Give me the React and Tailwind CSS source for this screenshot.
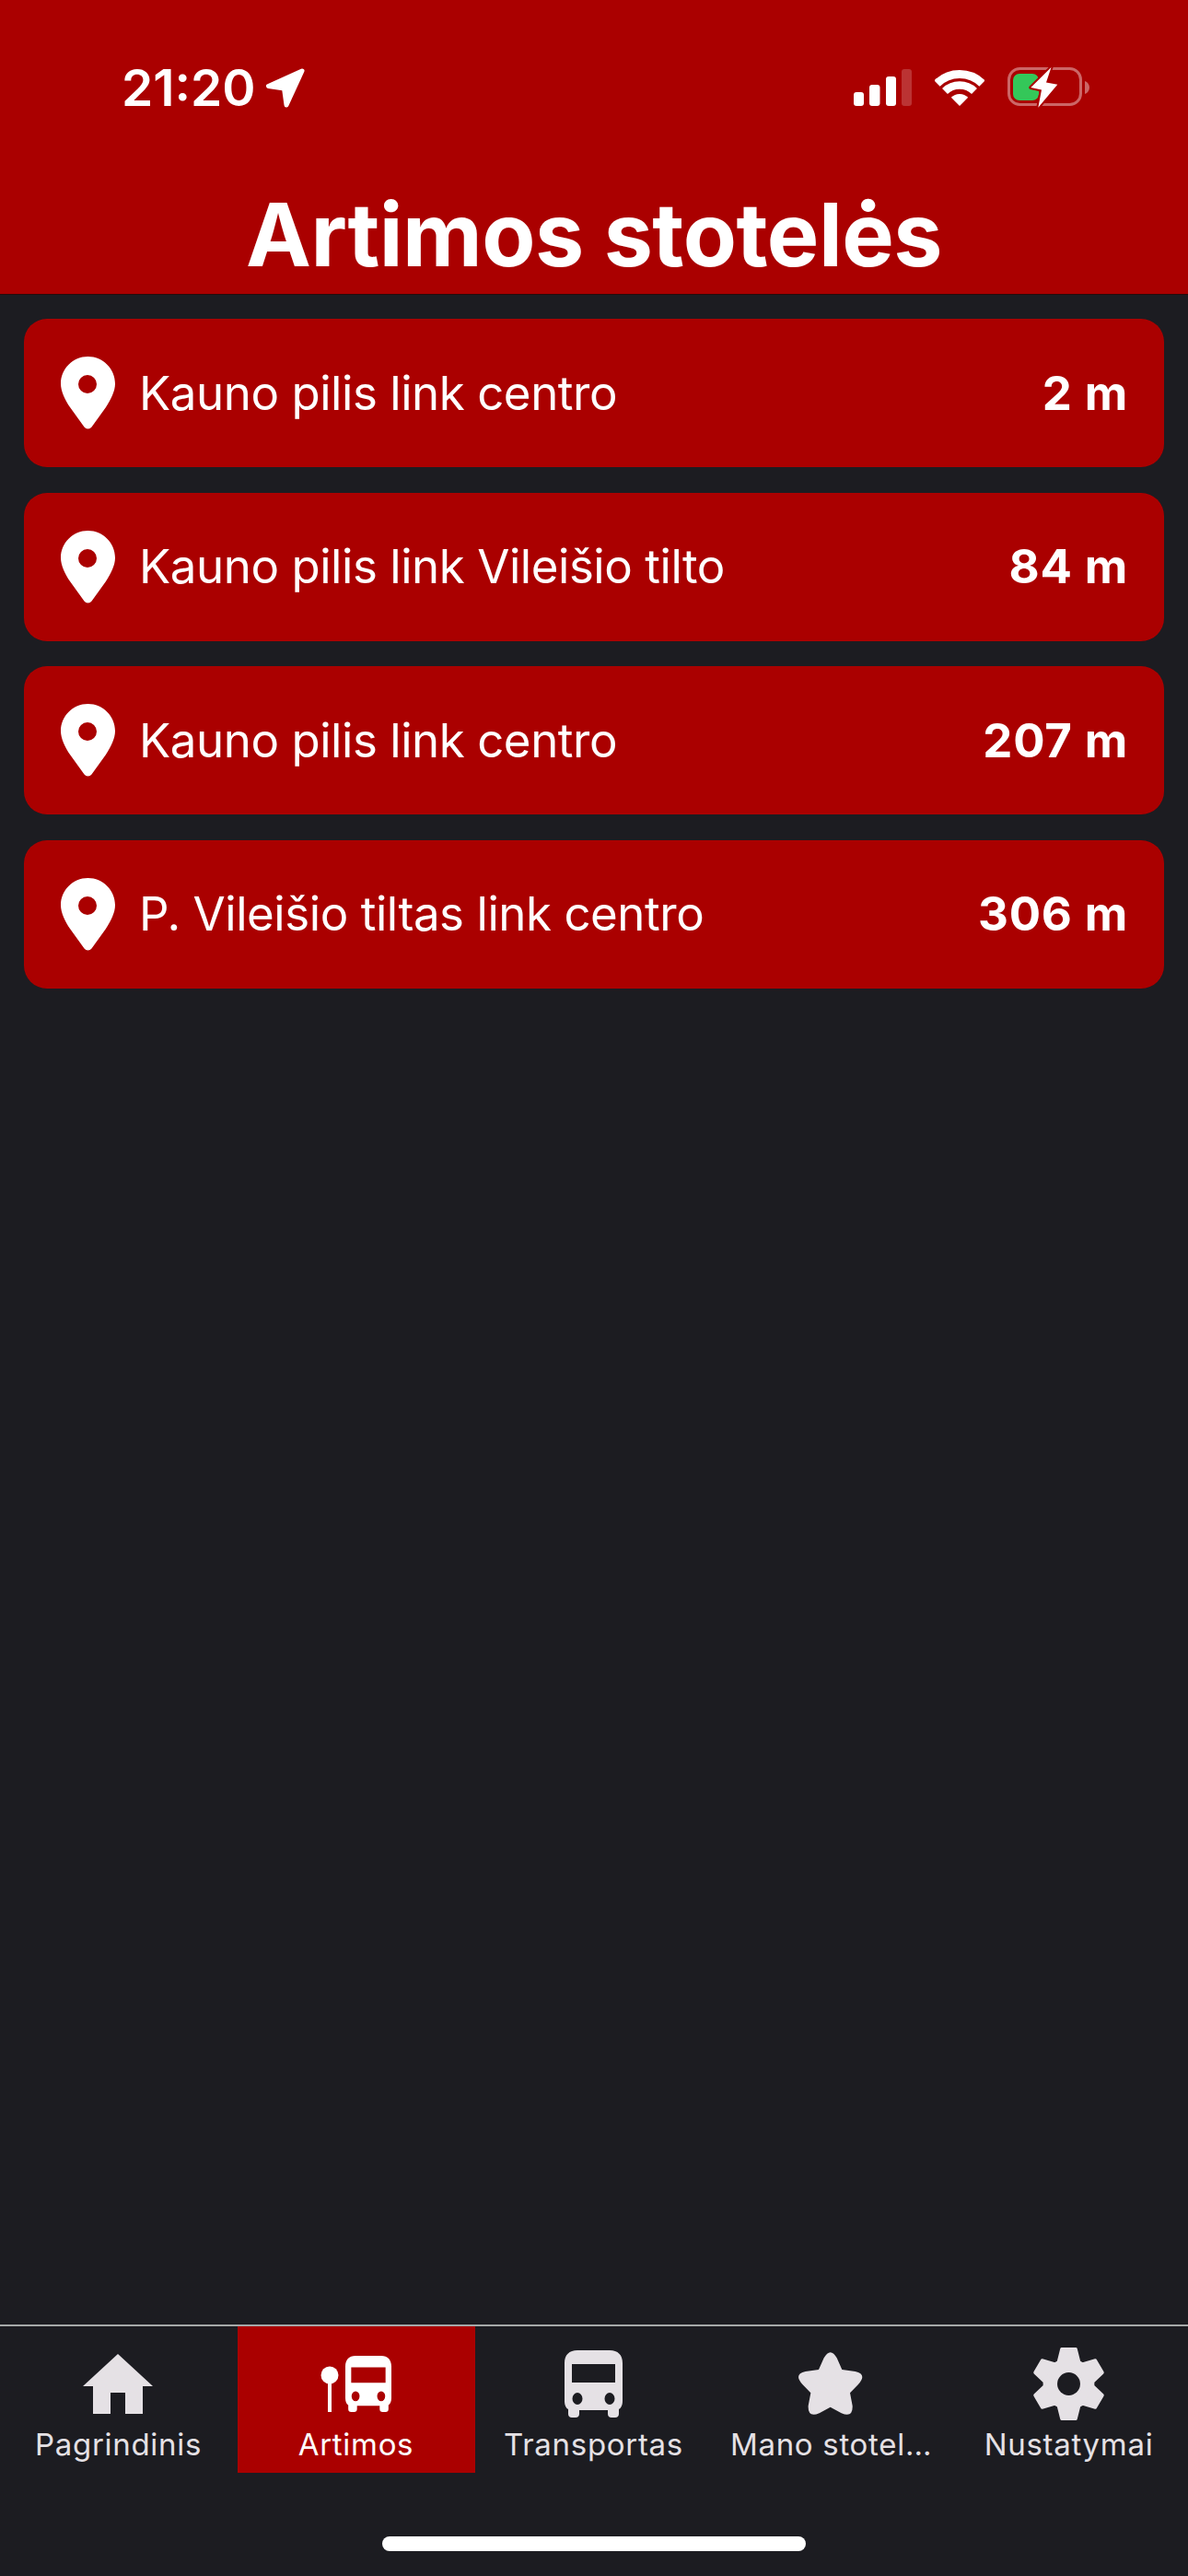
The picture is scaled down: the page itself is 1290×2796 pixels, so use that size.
import React from "react";

const stops = [
  { name: "Kauno pilis link centro", distance: "2 m" },
  { name: "Kauno pilis link Vileišio tilto", distance: "84 m" },
  { name: "Kauno pilis link centro", distance: "207 m" },
  { name: "P. Vileišio tiltas link centro", distance: "306 m" },
];

const PinIcon = () => (
  <svg width="59" height="79" viewBox="0 0 59 79" className="shrink-0">
    <path
      fill="#fff"
      fillRule="evenodd"
      d="M29.5 0C45.8 0 59 13.2 59 29.5c0 8-4.5 17-10 25.5L33.5 76.5a5 5 0 0 1-8 0L10 55C4.5 47 0 37.5 0 29.5 0 13.2 13.2 0 29.5 0zM29 20a10 10 0 1 0 0 20 10 10 0 0 0 0-20z"
    />
  </svg>
);

const ArrowIcon = () => (
  <svg width="44" height="44" viewBox="0 0 44 44">
    <path d="M40 4 3.5 20.5 20.5 23 23 41z" fill="#fff" stroke="#fff" strokeWidth="5" strokeLinejoin="round" />
  </svg>
);

const SignalIcon = () => (
  <svg width="63" height="44" viewBox="0 0 63 44">
    <rect x="0" y="27" width="11" height="15" rx="3" fill="#fff" />
    <rect x="17" y="19" width="11.5" height="23" rx="3" fill="#fff" />
    <rect x="35" y="10" width="11" height="32" rx="3" fill="#fff" />
    <rect x="52" y="2" width="11" height="40" rx="3" fill="#fff" fillOpacity="0.2" />
  </svg>
);

const WifiIcon = () => (
  <svg width="54" height="44" viewBox="0 0 54 44" fill="none">
    <path d="M2.5 17.5A35 35 0 0 1 51.5 17.5" stroke="#fff" strokeWidth="9" />
    <path d="M11 26A23 23 0 0 1 43 26" stroke="#fff" strokeWidth="8.5" />
    <path d="M27 42 17.8 32.8A13 13 0 0 1 36.2 32.8z" fill="#fff" />
  </svg>
);

const BatteryIcon = () => (
  <svg width="89" height="44" viewBox="0 0 89 44">
    <rect x="1.5" y="1.5" width="78" height="39" rx="12" fill="none" stroke="#fff" strokeOpacity="0.4" strokeWidth="3" />
    <path d="M84 15c3 1 5 4 5 7s-2 6-5 7z" fill="#fff" fillOpacity="0.4" />
    <rect x="6" y="7" width="28" height="29" rx="7" fill="#34c759" />
    <path
      d="M47.5 0 25.3 22 37 24.5 33.3 43.7 54.3 18.700 42 16.500z"
      fill="#fff"
      stroke="#aa0000"
      strokeWidth="4"
      strokeLinejoin="round"
      paintOrder="stroke"
    />
  </svg>
);

const HomeIcon = () => (
  <svg width="76" height="65" viewBox="0 0 76 65">
    <path fill="#e5e1e5" d="M38 0 76 35H65V65H46V42H30V65H11V35H0z" />
  </svg>
);

// same bus for the active stop icon and the transport tab
const busPath =
  "M14 0H49C58 0 63 5 63 14V55C63 60 61 63 59 64V69C59 71.500 57.500 73 55 73H51C48.500 73 47 71.500 47 69V65H16V69C16 71.500 14.500 73 12 73H8C5.500 73 4 71.500 4 69V64C2 63 0 60 0 55V14C0 5 5 0 14 0ZM8 15V35H55V15ZM14 46A5.500 6.500 0 1 0 14 59 5.500 6.500 0 1 0 14 46ZM49 46A5.500 6.500 0 1 0 49 59 5.500 6.500 0 1 0 49 46Z";

const BusIcon = () => (
  <svg width="63" height="73" viewBox="0 0 63 73">
    <path fill="#e5e1e5" fillRule="evenodd" d={busPath} />
  </svg>
);

const StopIcon = () => (
  <svg width="77" height="61" viewBox="0 0 77 61">
    <circle cx="10" cy="21" r="9.500" fill="#fff" />
    <rect x="8" y="25" width="4" height="36" fill="#fff" />
    <svg x="27" y="0" width="50" height="61" viewBox="0 0 63 73" preserveAspectRatio="none">
      <path fill="#fff" fillRule="evenodd" d={busPath} />
    </svg>
  </svg>
);

const StarIcon = () => (
  <svg width="70" height="70" viewBox="50 50 210 210">
    <path
      fill="#e5e1e5"
      d="M133 72Q154 35 175 72L192 110 235 116Q275 125 245 158L218 186 226 228Q228 268 190 252L154 232 118 252Q80 268 82 228L90 186 63 158Q33 125 73 116L116 110Z"
    />
  </svg>
);

const GearIcon = () => (
  <svg width="83" height="83" viewBox="-125 -125 250 250" className="-m-[2px]">
    <circle r="84" fill="#e5e1e5" />
    {[0, 60, 120, 180, 240, 300].map((angle) => (
      <path
        key={angle}
        transform={`rotate(${angle})`}
        d="M-23-114H23L34-70H-34z"
        fill="#e5e1e5"
        stroke="#e5e1e5"
        strokeWidth="10"
        strokeLinejoin="round"
      />
    ))}
    <circle r="37.500" fill="#1c1c21" />
  </svg>
);

const tabs = [
  { label: "Pagrindinis", icon: <HomeIcon /> },
  { label: "Artimos", icon: <StopIcon />, active: true },
  { label: "Transportas", icon: <BusIcon /> },
  { label: "Mano stotel…", icon: <StarIcon /> },
  { label: "Nustatymai", icon: <GearIcon /> },
];

export default function App() {
  return (
    <div className="flex h-[2796px] w-[1290px] flex-col bg-[#1c1c21] font-['Inter',sans-serif] text-white">
      {/* Header with status bar */}
      <header className="flex h-[320px] shrink-0 flex-col border-b border-[#2a0a0a] bg-[#aa0000]">
        <div className="flex h-[44px] mt-[73px] items-center justify-between pl-[132px] pr-[107px]">
          <div className="flex items-center gap-[10px]">
            <span className="text-[55px] font-semibold leading-[44px]">21:20</span>
            <ArrowIcon />
          </div>
          <div className="flex items-center gap-[25px]">
            <SignalIcon />
            <WifiIcon />
            <BatteryIcon />
          </div>
        </div>
        <h1 className="mt-[80px] text-center text-[95px] font-bold leading-[116px] tracking-[-0.5px]">Artimos stotelės</h1>
      </header>

      {/* Stops */}
      <main className="flex flex-1 flex-col gap-[27.5px] px-[26px] pt-[26px]">
        {stops.map((stop, i) => (
          <div key={i} className="flex h-[161px] items-center gap-[26px] rounded-[25px] bg-[#aa0000] pl-[40px] pr-[39px]">
            <PinIcon />
            <span className="flex-1 text-[51px] leading-[62px] tracking-[-0.45px]">{stop.name}</span>
            <span className="text-[51px] font-bold leading-[62px] tracking-[0.8px]">{stop.distance}</span>
          </div>
        ))}
      </main>

      {/* Bottom tabs */}
      <footer className="h-[273px] shrink-0 border-t-2 border-[#a5a8a8]">
        <div className="grid h-[159px] grid-cols-5">
          {tabs.map((tab) => (
            <div
              key={tab.label}
              className={`flex flex-col items-center pt-[22px] ${tab.active ? "bg-[#aa0000] text-white" : "text-[#e5e1e5]"}`}
            >
              <div className="flex h-[80px] items-center justify-center pr-[2px]">{tab.icon}</div>
              <span className="mt-[6px] pr-[1px] text-[33px] leading-[40px] tracking-[0.7px]">{tab.label}</span>
            </div>
          ))}
        </div>
        <div className="mx-auto mt-[69px] h-[16px] w-[460px] rounded-full bg-white" />
      </footer>
    </div>
  );
}
